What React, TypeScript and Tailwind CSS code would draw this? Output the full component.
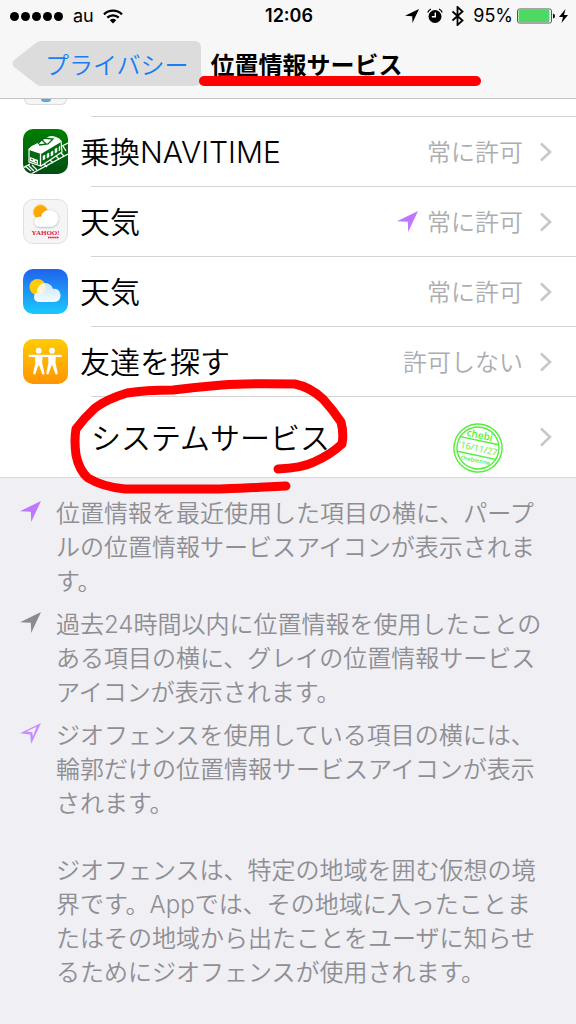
import type { ReactNode } from "react";

function LocationArrow({ className = "" }: { className?: string }) {
  return (
    <svg viewBox="0 0 62 62" className={`shrink-0 ${className}`} aria-hidden="true">
      <path d="M62 0 33 62 32 32 0 30Z" fill="currentColor" />
    </svg>
  );
}

function LocationOutline({ className = "" }: { className?: string }) {
  return (
    <svg viewBox="0 0 62 62" className={`shrink-0 ${className}`} aria-hidden="true">
      <path
        d="M62 0 33 62 30 34 0 30ZM49 11 19 25 36 27 38 40Z"
        fill="currentColor"
        fillRule="evenodd"
      />
    </svg>
  );
}

function Chevron() {
  return (
    <svg viewBox="0 0 13 20" className="h-5 w-[13px] shrink-0" aria-hidden="true">
      <path d="M2 1.5 11 10 2 18.5" fill="none" stroke="#c7c7cc" strokeWidth="2.6" />
    </svg>
  );
}

function NavitimeIcon() {
  return (
    <svg viewBox="0 0 45 45" className="size-[45px] shrink-0" aria-hidden="true">
      <defs>
        <linearGradient id="navitime" x2="0" y2="1">
          <stop stopColor="#008000" />
          <stop offset="1" stopColor="#004d13" />
        </linearGradient>
        <clipPath id="tile">
          <rect width="45" height="45" rx="10" />
        </clipPath>
      </defs>
      <g clipPath="url(#tile)">
        <rect width="45" height="45" fill="url(#navitime)" />
        <g fill="none" stroke="#fff" strokeWidth="1.3">
          <path d="M0 39 7 35M8 45 45 25M39 17l6-3" />
          <path d="m2 37 6 5M5 36l6 6M9 36l5 5M21 35l3 3M27 31l3 3M33 27l3 3M38 24l3 3M40 17l3 5" />
        </g>
        <path
          d="M6 20 26 8c4-1 10 1 12 4l1 11L18 37 6 33Z"
          fill="#006a10"
          stroke="#fff"
          strokeWidth="1.2"
        />
        <path d="M6 21c1-3 2-4 5-5L26 8c5-1 10 1 12 5L18 25Z" fill="#fff" />
        <path
          d="m15 15 5-6 10 1-5 5-9 1M19 11l4 4"
          fill="none"
          stroke="#006a10"
          strokeWidth="1.3"
        />
        <path
          d="m20 27 2-1v4l-2 1ZM24 25l2-1v4l-2 1ZM28 23l2-1v4l-2 1ZM32 20l2-1v4l-2 1ZM36 18l1-1v4l-1 1Z"
          fill="#fff"
          stroke="#fff"
          strokeWidth=".5"
        />
        <path d="M17.5 25v12" fill="none" stroke="#fff" strokeWidth="1.3" />
        <path d="m7 28 8 3v4l-8-3Z" fill="#fff" />
        <path d="m8 30 2 1M12 32l2 1" stroke="#006a10" />
      </g>
    </svg>
  );
}

function YahooWeatherIcon() {
  return (
    <svg viewBox="0 0 45 45" className="size-[45px] shrink-0" aria-hidden="true">
      <defs>
        <filter id="cloudShadow">
          <feDropShadow dx="0" dy="0.5" stdDeviation="0.8" floodOpacity="0.35" />
        </filter>
      </defs>
      <rect x=".5" y=".5" width="44" height="44" rx="9.5" fill="#f5f5f5" stroke="#e0e0e0" />
      <circle cx="17.5" cy="13" r="7.2" fill="#ffa800" stroke="#ffd45a" />
      <path
        d="M16.5 27.8a5 5 0 0 1 0-10l1.500 0a7 7 0 0 1 9.500-6c4.500 0 7.700 3 7.700 7.500s-3.200 8.500-8 8.500Z"
        fill="#fff"
        filter="url(#cloudShadow)"
      />
      <text
        x="8.5"
        y="36"
        fill="#e6153f"
        fontFamily="Liberation Serif, serif"
        fontSize="7"
        fontWeight="700"
      >
        YAHOO!
      </text>
      <path d="M25 38.500h11" stroke="#e6153f" strokeWidth="1.6" strokeDasharray="1.600 .5" />
    </svg>
  );
}

function WeatherIcon() {
  return (
    <svg viewBox="0 0 45 45" className="size-[45px] shrink-0" aria-hidden="true">
      <defs>
        <linearGradient id="sky" x2="0" y2="1">
          <stop stopColor="#1f62ee" />
          <stop offset="1" stopColor="#1bc9fc" />
        </linearGradient>
        <linearGradient id="cloud" x2="0" y2="1">
          <stop stopColor="#fff" stopOpacity=".75" />
          <stop offset="1" stopColor="#f4fafe" />
        </linearGradient>
      </defs>
      <rect width="45" height="45" rx="10" fill="url(#sky)" />
      <circle cx="14.5" cy="18" r="8" fill="#fecb0a" />
      <path
        d="M15 33a5 5 0 0 1-1-9.500C14 18 17.500 14 22 14c4 0 7 2.500 8 6 4-1 7.500 2 7.500 6.300C37.500 30.500 35 33 31 33Z"
        fill="url(#cloud)"
      />
    </svg>
  );
}

function FriendsIcon() {
  return (
    <svg viewBox="0 0 45 45" className="size-[45px] shrink-0" aria-hidden="true">
      <defs>
        <linearGradient id="orange" x2="0" y2="1">
          <stop stopColor="#ffcb05" />
          <stop offset="1" stopColor="#ff9500" />
        </linearGradient>
      </defs>
      <rect width="45" height="45" rx="10" fill="url(#orange)" />
      <g fill="#fff">
        <circle cx="15.7" cy="11.7" r="2.9" />
        <circle cx="29" cy="11.7" r="2.9" />
        <rect x="5.5" y="15.7" width="33.5" height="2.2" rx="1" />
        <path d="M12 17h7.500l-.3 7 2.300 10.300c.2 1.400-2 1.700-2.400.4L16.200 26.500h-1l-2.700 8.200c-.4 1.300-2.700.8-2.400-.6L12.300 24Z" />
        <path d="M25.200 17h7.500l-.2 7 2.200 10.100c.3 1.400-2 1.900-2.400.6L29.400 26.500h-1l-2.700 8.200c-.4 1.300-2.700.8-2.400-.6L25.400 24Z" />
      </g>
    </svg>
  );
}

function Stamp() {
  return (
    <svg viewBox="0 0 50 50" className="size-[50px] shrink-0" aria-hidden="true">
      <g transform="rotate(12 25 25)" fill="none" stroke="#55ee38" strokeWidth="1.4">
        <circle cx="25" cy="25" r="24" />
        <circle cx="25" cy="25" r="21" />
        <path d="M5.5 17.5h39M5.5 32.5h39" />
        <g
          fill="#55ee38"
          stroke="none"
          textAnchor="middle"
          fontFamily="Open Sans, Noto Sans, sans-serif"
        >
          <text x="24" y="15.5" fontSize="10" fontWeight="600">chebi</text>
          <text x="25" y="28.5" fontSize="9">'16/11/27</text>
          <text x="25" y="39.5" fontSize="6" fontWeight="600">chebienne</text>
        </g>
      </g>
    </svg>
  );
}

function StatusBar() {
  return (
    <div className="grid h-8 grid-cols-[1fr_auto_1fr] items-center pr-2 pl-[10px] text-lg">
      <div className="flex items-center">
        <div className="flex gap-[2px]">
          {[1, 2, 3, 4, 5].map((dot) => (
            <span key={dot} className="size-[9px] rounded-full bg-black" />
          ))}
        </div>
        <span className="ml-[10px] font-normal">au</span>
        <svg viewBox="0 0 20 15" className="ml-[9px] h-[15px] w-5" aria-hidden="true">
          <g fill="none" stroke="#000" strokeWidth="2.3">
            <path d="M1 5.300a13 13 0 0 1 18 0" />
            <path d="M4.300 8.700a8.300 8.300 0 0 1 11.400 0" />
          </g>
          <path d="m10 14.500-3.200-3.200a4.700 4.700 0 0 1 6.400 0Z" />
        </svg>
      </div>
      <span className="font-semibold">12:06</span>
      <div className="flex items-center justify-end">
        <LocationArrow className="size-[14px]" />
        <svg viewBox="0 0 16 16" className="ml-2 size-4" aria-hidden="true">
          <circle cx="8" cy="8.5" r="6.5" />
          <path
            d="M.8 4.500A6 6 0 0 1 4 1M12 1A6 6 0 0 1 15.200 4.500"
            fill="none"
            stroke="#000"
            strokeWidth="1.2"
          />
          <path d="M8.300 4.500v4.300H4.800" fill="none" stroke="#fff" strokeWidth="1.4" />
        </svg>
        <svg viewBox="0 0 13 20" className="ml-2 h-5 w-[13px]" aria-hidden="true">
          <path
            d="m1.500 5.500 10 9L6.500 19V1l5 4.500-10 9"
            fill="none"
            stroke="#000"
            strokeWidth="1.8"
          />
        </svg>
        <span className="ml-[9px] font-normal">95%</span>
        <svg viewBox="0 0 38 16" className="ml-1 h-4 w-[38px]" aria-hidden="true">
          <rect x=".5" y="1" width="34" height="14" rx="2" fill="#fff" stroke="#555" />
          <rect x="1.5" y="2" width="31" height="12" rx="1" fill="#4cd964" />
          <path d="M36 5.500q2 .5 2 2.500t-2 2.500Z" />
        </svg>
        <svg viewBox="0 0 9 14" className="ml-1 h-[14px] w-[9px]" aria-hidden="true">
          <path d="M6.500 0 0 8h4L2.500 14 9 6H5Z" />
        </svg>
      </div>
    </div>
  );
}

const apps = [
  { name: "乗換NAVITIME", Icon: NavitimeIcon, status: "常に許可", recent: false },
  { name: "天気", Icon: YahooWeatherIcon, status: "常に許可", recent: true },
  { name: "天気", Icon: WeatherIcon, status: "常に許可", recent: false },
  { name: "友達を探す", Icon: FriendsIcon, status: "許可しない", recent: false },
];

function Separator() {
  return <div className="ml-[91px] h-px bg-[#d4d4d7]" />;
}

function Note({ icon, children }: { icon?: ReactNode; children: ReactNode }) {
  return (
    <div className="flex">
      <div className="w-9 shrink-0 pt-1">{icon}</div>
      <p className="flex-1">{children}</p>
    </div>
  );
}

export default function App() {
  return (
    <div className="flex min-h-screen flex-col overflow-x-hidden bg-[#efeff4] font-['Inter','Noto_Sans_CJK_JP',sans-serif] text-black">
      <header className="relative z-10 h-[99px] border-b border-[#c4c4c6] bg-[#f7f7f7]">
        <StatusBar />
        <div className="flex items-center pt-[9px] pl-3 text-2xl leading-[50px]">
          <button className="flex h-[45px] text-[#187df7]">
            <svg viewBox="0 0 29 45" className="h-[45px] w-[29px]" aria-hidden="true">
              <path d="M29 0q-3 0-5 2L2 19q-3 3.500 0 7l22 17q2 2 5 2Z" fill="#dcdcdc" />
            </svg>
            <span className="h-[45px] rounded-r-md bg-[#dcdcdc] pr-3 pl-1 font-[350]">
              プライバシー
            </span>
          </button>
          <h1 className="relative ml-[10px] h-[45px] font-bold">
            位置情報サービス
            <span className="absolute top-[35px] -left-3 h-[10px] w-[282px] rounded-full bg-[#fe0000]" />
          </h1>
        </div>
      </header>

      <main>
        <ul className="border-b border-[#d9d9dd] bg-white">
          <li>
            <div className="flex h-[17px] items-start overflow-hidden pl-6">
              <div className="flex h-[6px] w-[43px] justify-center rounded-b-xl border-x border-b border-[#dcdcdc] bg-[#f5f5f5]">
                <span className="h-[3px] w-[10px] rounded-b-full bg-[#55acdf]" />
              </div>
            </div>
            <Separator />
          </li>
          {apps.map(({ name, Icon, status, recent }, i) => (
            <li key={i}>
              <button className="flex h-[69px] w-full items-center pr-6 pl-[23px] text-left">
                <Icon />
                <span className="ml-3 flex-1 pt-[2px] text-[30px] font-[350]">{name}</span>
                {recent && <LocationArrow className="mr-[9px] size-[21px] text-[#bf77ff]" />}
                <span className="mr-4 pt-[2px] text-2xl font-[350] text-[#adadb1]">{status}</span>
                <Chevron />
              </button>
              <Separator />
            </li>
          ))}
          <li className="relative">
            <button className="flex h-20 w-full items-center pr-6 pl-[91px] text-left">
              <span className="flex-1 pt-[2px] text-[30px] font-[350]">システムサービス</span>
              <span className="mr-9 pt-[22px]">
                <Stamp />
              </span>
              <Chevron />
            </button>
            <svg
              viewBox="60 370 300 130"
              className="pointer-events-none absolute -top-[27px] left-[60px] h-[130px] w-[300px]"
              aria-hidden="true"
            >
              <path
                d="M278 469Q302 468 314 462Q330 455 342 444Q344 433 341 422Q333 410 323 399Q310 387 295 384Q245 383 222 385Q198 387 173 390Q145 390 127 393Q107 399 95 408Q85 417 76 429Q74 440 76 455Q79 470 88 478Q103 487 125 489L220 489Q250 488 265 487L286 486"
                fill="none"
                stroke="#fe0000"
                strokeWidth="9"
                strokeLinecap="round"
                strokeLinejoin="round"
              />
            </svg>
          </li>
        </ul>

        <section className="flex flex-col gap-[9px] pt-[19px] pr-6 pb-9 pl-5 text-2xl leading-[34px] font-[350] text-[#8e8e93]">
          <Note icon={<LocationArrow className="size-[21px] text-[#bf77ff]" />}>
            位置情報を最近使用した項目の横に、パープルの位置情報サービスアイコンが表示されます。
          </Note>
          <Note icon={<LocationArrow className="size-[21px] text-[#8a8a8f]" />}>
            過去24時間以内に位置情報を使用したことのある項目の横に、グレイの位置情報サービスアイコンが表示されます。
          </Note>
          <Note icon={<LocationOutline className="size-[21px] text-[#c88cff]" />}>
            ジオフェンスを使用している項目の横には、輪郭だけの位置情報サービスアイコンが表示されます。
          </Note>
          <div className="pt-6">
            <Note>
              ジオフェンスは、特定の地域を囲む仮想の境界です。Appでは、その地域に入ったことまたはその地域から出たことをユーザに知らせるためにジオフェンスが使用されます。
            </Note>
          </div>
        </section>
      </main>
    </div>
  );
}
